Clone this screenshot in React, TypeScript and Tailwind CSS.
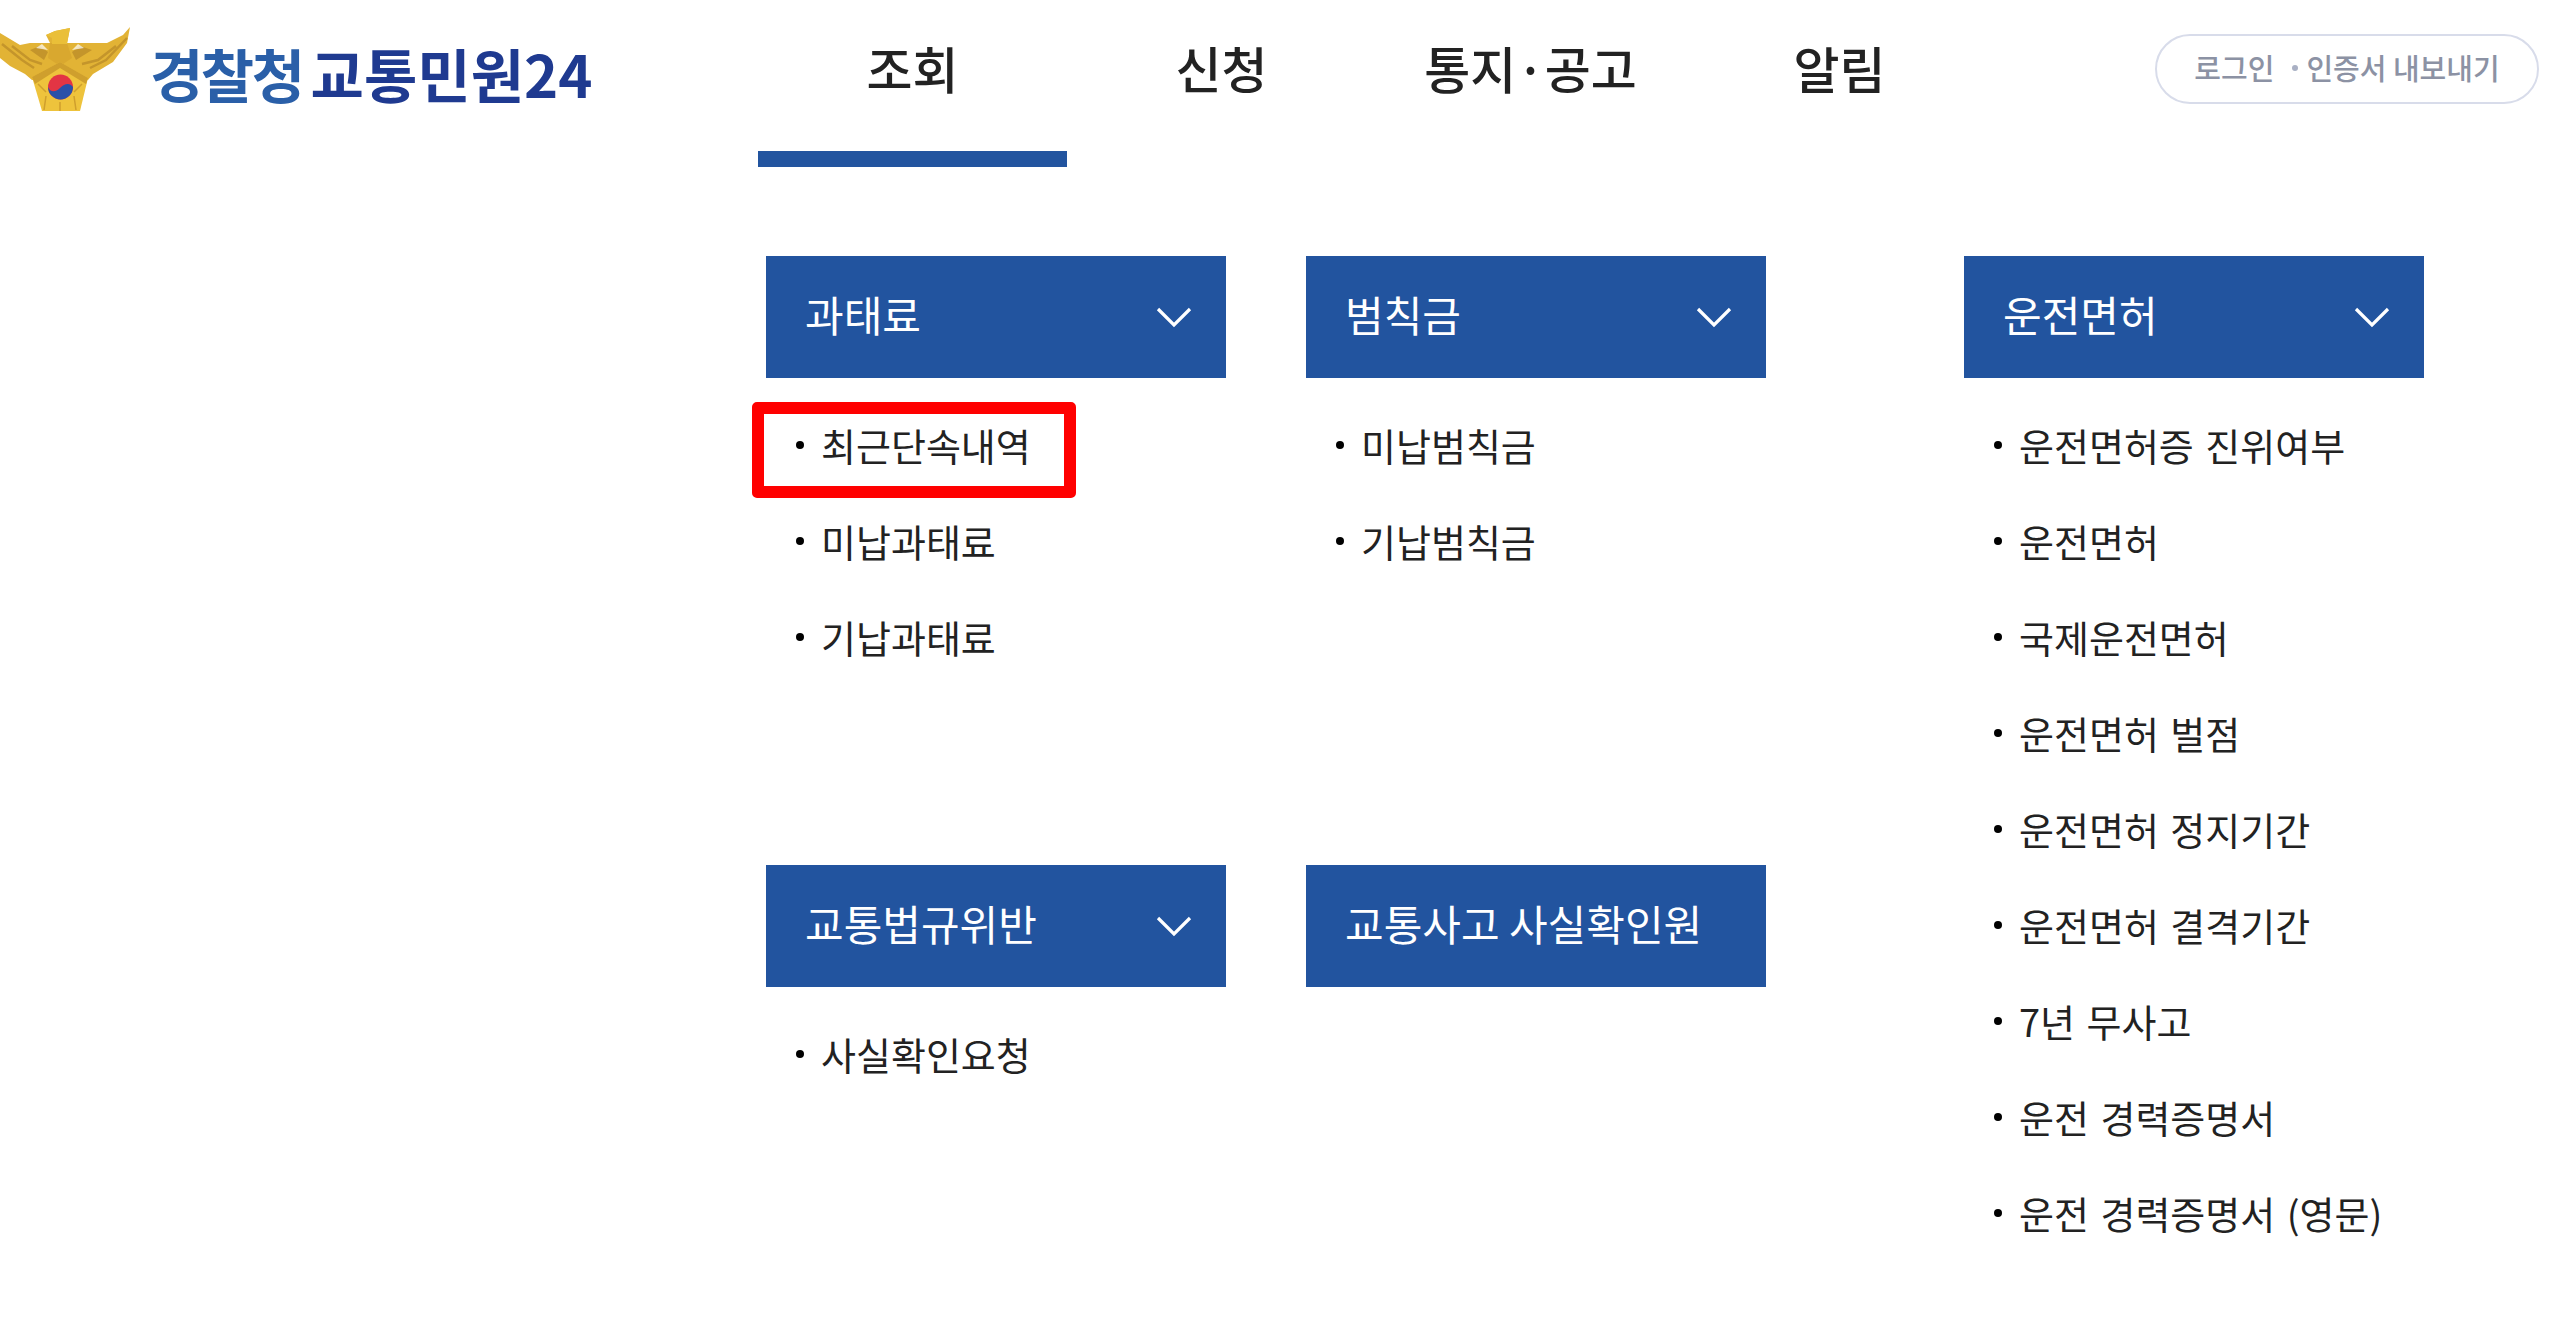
import React from 'react';

const font = { fontFamily: '"Noto Sans CJK KR", "Noto Sans", sans-serif' };

const navItems = ['조회', '신청', '통지·공고', '알림'];

const Emblem: React.FC = () => (
  <svg width="132" height="112" viewBox="0 0 132 112" className="shrink-0 blur-[0.6px]">
    {/* wings and body */}
    <path
      d="M0 33 L20 45 L30 43 L48 43 L50 43 L46 35 L55 31 L70 28 L67 43 L90 43 L107 43 L123 35 L130 27 L127 43 L113 62 L93 74 L88 80 L32 80 L25 74 L10 66 L0 58 Z"
      fill="#e2b335"
    />
    <path d="M2 44 L22 60 L34 68 M12 46 L30 60 L42 64 M127 38 L106 60 L90 68 M116 46 L98 60 L82 64" stroke="#c4952b" strokeWidth="2.5" fill="none" />
    <path d="M40 46 L48 52 L44 60 L30 50 Z M80 46 L72 52 L76 60 L92 50 Z" fill="#c4952b" />
    <path d="M42 44 L48 50 L36 48 Z M78 44 L72 50 L84 48 Z" fill="#ffffff" opacity="0.7" />
    <path d="M50 43 L67 43 L72 58 L60 66 L48 58 Z" fill="#d9a82f" />
    <path d="M46 35 L55 31 L70 28 L67 44 L52 44 L52 38 Z" fill="#eabf38" />
    {/* shield */}
    <path d="M60 62 L88 78 L80 111 L42 111 L32 77 Z" fill="#eec33c" />
    <path d="M60 62 L88 78 L86 84 L60 68 L35 84 L32 77 Z" fill="#cf9f2d" />
    <path d="M46 96 L44 110 M60 102 L60 111 M74 96 L76 110 M38 84 L46 92 M82 84 L74 92" stroke="#cf9f2d" strokeWidth="1.5" fill="none" />
    {/* taegeuk */}
    <circle cx="60.5" cy="87" r="12.5" fill="#e33544" />
    <path d="M48 87 C50 92 55 93 60 88 C65 83 70 83 73 87 A12.5 12.5 0 0 1 48 87 Z" fill="#2a50a8" />
  </svg>
);

const Chevron: React.FC = () => (
  <svg width="36" height="22" viewBox="0 0 36 22" className="shrink-0">
    <polyline points="2,3 18,19 34,3" fill="none" stroke="#ffffff" strokeWidth="3.2" />
  </svg>
);

interface GroupProps {
  title: string;
  items?: string[];
  chevron?: boolean;
  marked?: string;
}

const Group: React.FC<GroupProps> = ({ title, items = [], chevron = true, marked }) => (
  <div className="w-[460px]">
    <div className="flex h-[122px] items-center justify-between bg-[#22549f] pl-[39px] pr-[34px] text-[42px] text-white">
      <span className="relative -top-[4px]">{title}</span>
      {chevron && <Chevron />}
    </div>
    <ul className="mt-[19px]">
      {items.map((item) => (
        <li key={item} className="relative flex h-[96px] items-center text-[38px] text-[#222222]">
          <span className="ml-[30px] size-[8px] rounded-full bg-black" />
          <span className="relative -top-[1px] ml-[17px] whitespace-nowrap [word-spacing:3px]">{item}</span>
          {item === marked && (
            <span className="absolute -left-[14px] top-[4.5px] h-[96px] w-[324px] rounded-[5px] border-[12px] border-[#ff0000]" />
          )}
        </li>
      ))}
    </ul>
  </div>
);

export default function App() {
  return (
    <div className="h-[1326px] w-[2576px] overflow-hidden bg-white" style={font}>
      <header className="flex h-[167px] items-start">
        <div className="flex h-[167px] w-[757px] shrink-0 items-start">
          <Emblem />
          <div className="ml-[18px] mt-[41px] whitespace-nowrap text-[58px] font-bold leading-[64px] blur-[0.6px]">
            <span className="tracking-[-2.5px] text-[#2a5fa8]">경찰청</span>
            <span className="ml-[8px] tracking-[0px] text-[#1f3a90]">교통민원24</span>
          </div>
        </div>
        <nav className="ml-[1px] flex">
          {navItems.map((item, i) => (
            <div
              key={item}
              className={`flex h-[167px] w-[309px] justify-center whitespace-nowrap pt-[33px] text-[50px] font-medium leading-[68px] text-[#222222] ${
                i === 0 ? 'border-b-[16px] border-[#22549f]' : ''
              }`}
            >
              {item}
            </div>
          ))}
        </nav>
        <div className="ml-auto mr-[37px] mt-[34px] flex h-[70px] w-[384px] items-center justify-center whitespace-nowrap rounded-full border-2 border-[#d8dcea] pb-[2px] text-[29px] font-medium text-[#8c92a4]">
          <span>로그인</span>
          <span className="ml-[18px] mr-[8px] size-[6px] rounded-full bg-[#a9b0c4]" />
          <span>인증서 내보내기</span>
        </div>
      </header>

      <main className="ml-[766px] mt-[89px] grid grid-cols-[540px_658px_460px] grid-rows-[609px_auto]">
        <Group title="과태료" items={['최근단속내역', '미납과태료', '기납과태료']} marked="최근단속내역" />
        <Group title="범칙금" items={['미납범칙금', '기납범칙금']} />
        <div className="row-span-2">
          <Group
            title="운전면허"
            items={[
              '운전면허증 진위여부',
              '운전면허',
              '국제운전면허',
              '운전면허 벌점',
              '운전면허 정지기간',
              '운전면허 결격기간',
              '7년 무사고',
              '운전 경력증명서',
              '운전 경력증명서 (영문)',
            ]}
          />
        </div>
        <Group title="교통법규위반" items={['사실확인요청']} />
        <Group title="교통사고 사실확인원" chevron={false} />
      </main>
    </div>
  );
}
